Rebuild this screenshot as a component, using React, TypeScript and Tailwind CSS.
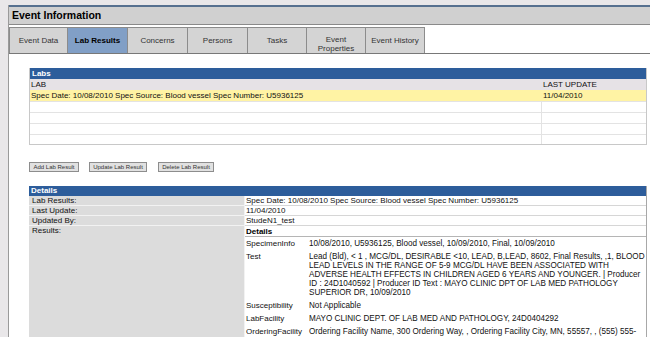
import React from "react";

const tabs: { label: React.ReactNode; w: string; active?: boolean }[] = [
  { label: "Event Data", w: "w-[59px]" },
  { label: "Lab Results", w: "w-[60px]", active: true },
  { label: "Concerns", w: "w-[60px]" },
  { label: "Persons", w: "w-[60px]" },
  { label: "Tasks", w: "w-[59px]" },
  { label: (<>Event<br />Properties</>), w: "w-[59px]" },
  { label: "Event History", w: "w-[59px]" },
];

function EmptyRow() {
  return (
    <div className="flex h-[11px] border-t border-[#e3e3e3]">
      <div className="w-[512px] border-r border-[#e3e3e3]" />
      <div className="flex-1" />
    </div>
  );
}

function DetailRow({ label, value }: { label: string; value: string }) {
  return (
    <div className="flex h-[10px] leading-[9px]">
      <div className="w-[216px] bg-[#dcdcdc] border-b border-r border-[#f2f2f2] pl-[3px]">{label}</div>
      <div className="flex-1 border-b border-[#d6d6d6] pl-[1px]">{value}</div>
    </div>
  );
}

function InnerRow({ label, children }: { label: string; children: React.ReactNode }) {
  return (
    <div className="flex py-[2px] leading-[9px]">
      <div className="w-[64px] shrink-0 pl-[1px]">{label}</div>
      <div className="flex-1 whitespace-nowrap text-[8.15px]">{children}</div>
    </div>
  );
}

export default function App() {
  return (
    <div className="w-[650px] h-[337px] overflow-hidden bg-[#e9e7e9] pt-[5px] pl-[8px] font-['Liberation_Sans',Arial,sans-serif] text-[#111]">
      <div className="h-full border-l border-[#9a9a9a] bg-white flex flex-col">
        <div className="h-[20px] shrink-0 border-t-2 border-t-[#56708f] border-b border-b-[#8a8a8a] bg-[#d0d0d0] pl-[3px] text-[10.5px] font-bold leading-[17px] text-black">
          Event Information
        </div>
        <div className="h-[29px] shrink-0 border-b border-[#787878] flex items-end">
          {tabs.map((t, i) => (
            <div
              key={i}
              className={`${t.w} h-[26px] flex items-center justify-center text-center text-[8px] leading-[9px] border-t border-r border-[#8c8c8c] ${i === 0 ? "border-l" : ""} ${t.active ? "bg-[#819fc6] font-bold text-black" : "bg-[#d4d4d4] text-[#333]"}`}
            >
              <span className={typeof t.label === "string" ? "" : "mt-[6px]"}>{t.label}</span>
            </div>
          ))}
        </div>

        <div className="pl-[20px] pr-[3px] pt-[14px] text-[8px]">
          <div className="border-x border-b border-[#c8c8c8]">
            <div className="h-[11px] bg-[#2d5d9b] text-white font-bold leading-[11px] pl-[2px]">Labs</div>
            <div className="flex h-[11px] bg-[#e6e2e6] leading-[11px]">
              <div className="w-[512px] pl-[1px]">LAB</div>
              <div className="flex-1 pl-[1px]">LAST UPDATE</div>
            </div>
            <div className="flex h-[11px] bg-[#fff3a4] leading-[11px]">
              <div className="w-[512px] pl-[1px]">Spec Date: 10/08/2010 Spec Source: Blood vessel Spec Number: U5936125</div>
              <div className="flex-1 pl-[1px]">11/04/2010</div>
            </div>
            <EmptyRow />
            <EmptyRow />
            <EmptyRow />
            <div className="flex h-[10px] border-t border-[#e3e3e3]">
              <div className="w-[512px] border-r border-[#e3e3e3]" />
              <div className="flex-1" />
            </div>
          </div>

          <div className="mt-[17px] flex text-[6px] leading-[8px] text-[#333]">
            <button className="w-[50px] h-[10px] border border-[#8d8d8d] bg-[#e1e1e1]">Add Lab Result</button>
            <button className="ml-[10px] w-[58px] h-[10px] border border-[#8d8d8d] bg-[#e1e1e1]">Update Lab Result</button>
            <button className="ml-[11px] w-[56px] h-[10px] border border-[#8d8d8d] bg-[#e1e1e1]">Delete Lab Result</button>
          </div>

          <div className="mt-[14px] border-r border-[#a8a8a8]">
            <div className="h-[10px] bg-[#2d5d9b] text-white font-bold leading-[10px] pl-[2px]">Details</div>
            <DetailRow label="Lab Results:" value="Spec Date: 10/08/2010 Spec Source: Blood vessel Spec Number: U5936125" />
            <DetailRow label="Last Update:" value="11/04/2010" />
            <DetailRow label="Updated By:" value="StudeN1_test" />
            <div className="flex">
              <div className="w-[216px] bg-[#dcdcdc] border-r border-[#f2f2f2] pl-[3px] leading-[10px] h-[120px]">Results:</div>
              <div className="flex-1">
                <div className="h-[11px] border-b border-[#b5b5b5] font-bold leading-[11px] pl-[1px] text-black">Details</div>
                <InnerRow label="SpecimenInfo">10/08/2010, U5936125, Blood vessel, 10/09/2010, Final, 10/09/2010</InnerRow>
                <InnerRow label="Test">
                  Lead (Bld), &lt; 1 , MCG/DL, DESIRABLE &lt;10, LEAD, B,LEAD, 8602, Final Results, ,1, BLOOD
                  <br />
                  LEAD LEVELS IN THE RANGE OF 5-9 MCG/DL HAVE BEEN ASSOCIATED WITH
                  <br />
                  ADVERSE HEALTH EFFECTS IN CHILDREN AGED 6 YEARS AND YOUNGER. | Producer
                  <br />
                  ID : 24D1040592 | Producer ID Text : MAYO CLINIC DPT OF LAB MED PATHOLOGY
                  <br />
                  SUPERIOR DR, 10/09/2010
                </InnerRow>
                <InnerRow label="Susceptibility">Not Applicable</InnerRow>
                <InnerRow label="LabFacility">MAYO CLINIC DEPT. OF LAB MED AND PATHOLOGY, 24D0404292</InnerRow>
                <InnerRow label="OrderingFacility">Ordering Facility Name, 300 Ordering Way, , Ordering Facility City, MN, 55557, , (555) 555-</InnerRow>
              </div>
            </div>
          </div>
        </div>
      </div>
    </div>
  );
}
